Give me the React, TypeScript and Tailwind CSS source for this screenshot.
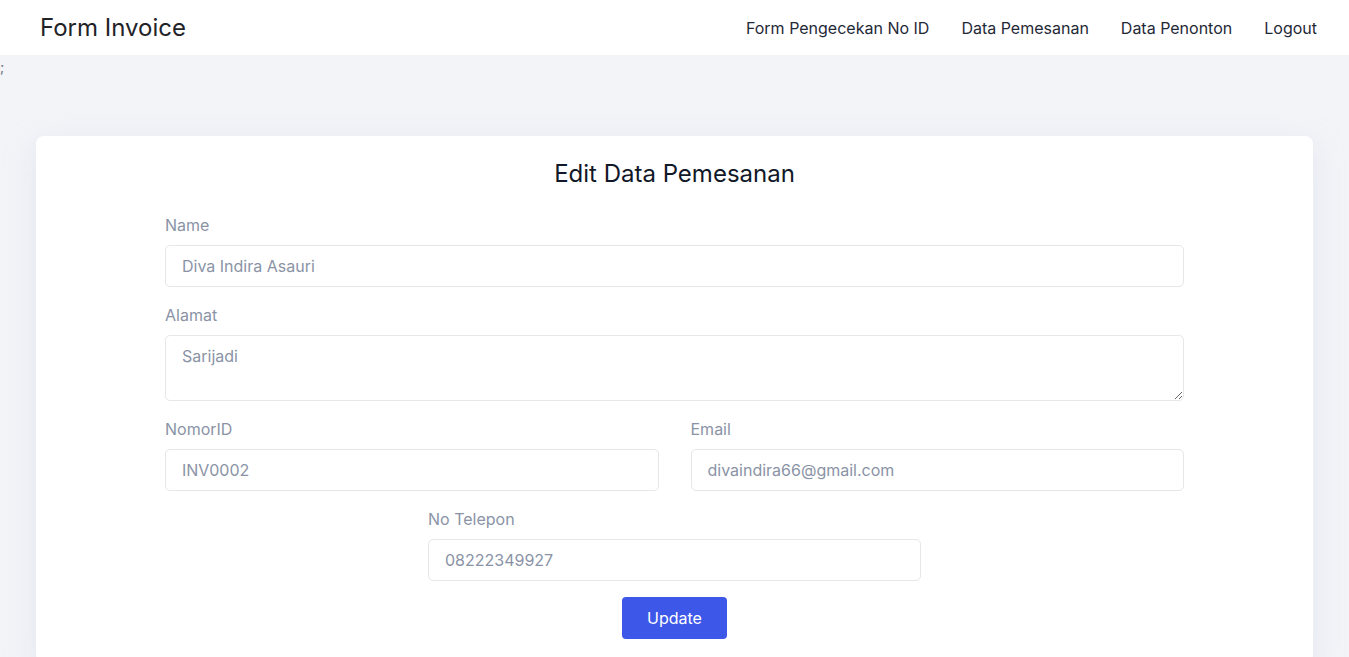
import React from "react";

const inputCls =
  "w-full h-[42px] rounded-[5px] border border-[#e5e7eb] bg-white px-4 text-[16px] text-[#8a93a6] outline-none";
const labelCls = "block text-[16px] leading-6 text-[#8a93a6] mb-2";

export default function App() {
  return (
    <div
      className="min-h-[657px] bg-[#f3f4f8]"
      style={{ fontFamily: "Inter, 'Noto Sans', sans-serif" }}
    >
      <nav className="h-[55px] bg-white flex items-center justify-between pl-10 pr-8">
        <div className="text-[24px] text-[#1f2328] leading-8">Form Invoice</div>
        <div className="flex items-center gap-8 text-[16px] text-[#1f2937]">
          <span>Form Pengecekan No ID</span>
          <span>Data Pemesanan</span>
          <span>Data Penonton</span>
          <span>Logout</span>
        </div>
      </nav>
      <div className="text-[14px] leading-6 text-[#6b7280] pl-0">;</div>
      <div className="px-9 pt-[57px]">
        <div className="bg-white rounded-lg shadow-[0_8px_30px_rgba(200,205,225,0.35)] pt-[22px] pb-6">
          <h1 className="text-center text-[24px] leading-8 text-[#111827] mb-[23px]">
            Edit Data Pemesanan
          </h1>
          <form className="w-[1019px] mx-auto flex flex-col gap-4">
            <div>
              <label className={labelCls}>Name</label>
              <input className={inputCls} defaultValue="Diva Indira Asauri" />
            </div>
            <div>
              <label className={labelCls}>Alamat</label>
              <textarea
                className="w-full h-[66px] rounded-[5px] border border-[#e5e7eb] bg-white px-4 pt-[8px] text-[16px] leading-6 text-[#8a93a6] outline-none block"
                defaultValue="Sarijadi"
              />
            </div>
            <div className="grid grid-cols-2 gap-8">
              <div>
                <label className={labelCls}>NomorID</label>
                <input className={inputCls} defaultValue="INV0002" />
              </div>
              <div>
                <label className={labelCls}>Email</label>
                <input className={inputCls} defaultValue="divaindira66@gmail.com" />
              </div>
            </div>
            <div className="w-[493px] mx-auto">
              <label className={labelCls}>No Telepon</label>
              <input className={inputCls} defaultValue="08222349927" />
            </div>
            <div className="flex justify-center">
              <button
                type="button"
                className="w-[105px] h-[42px] rounded-[4px] bg-[#3d57e8] text-white text-[16px]"
              >
                Update
              </button>
            </div>
          </form>
        </div>
      </div>
    </div>
  );
}
